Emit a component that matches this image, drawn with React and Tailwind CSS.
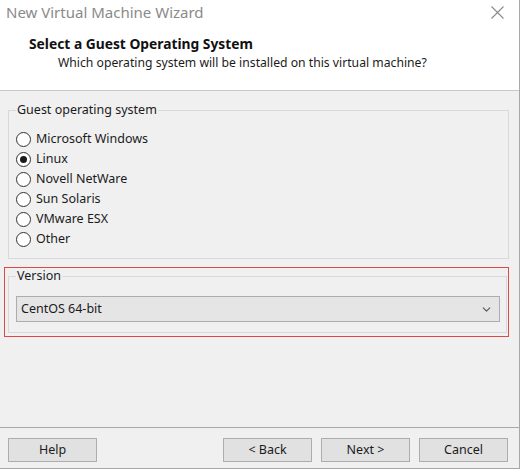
import React from "react";
import { ChevronDown } from "lucide-react";

const systems = [
  { label: "Microsoft Windows", checked: false },
  { label: "Linux", checked: true },
  { label: "Novell NetWare", checked: false },
  { label: "Sun Solaris", checked: false },
  { label: "VMware ESX", checked: false },
  { label: "Other", checked: false },
];

function Radio({ label, checked }) {
  return (
    <label className="flex items-center h-[20px] gap-[5px] text-[12.5px] text-[#1b1b1b]">
      <span className="flex items-center justify-center w-[15px] h-[15px] rounded-full border border-[#333] bg-white">
        {checked && <span className="w-[7px] h-[7px] rounded-full bg-[#1b1b1b]" />}
      </span>
      {label}
    </label>
  );
}

function WizButton({ children, className = "" }) {
  return (
    <button
      type="button"
      className={`w-[89px] h-[24px] border border-[#adadad] bg-[#e1e1e1] text-[12.5px] text-[#1b1b1b] ${className}`}
    >
      {children}
    </button>
  );
}

export default function App() {
  return (
    <div className="w-[524px] h-[475px] bg-white overflow-hidden" style={{ fontFamily: '"Noto Sans", "Open Sans", sans-serif' }}>
      <div className="w-[520px] h-[469px] flex flex-col bg-[#f0f0f0] border-r border-b border-[#a8a8a8]">
        {/* title bar + header */}
        <div className="bg-white border-b border-[#c8c8c8]">
          <div className="h-[24px] flex items-center justify-between pl-[6px] pr-[15px]">
            <span className="text-[15px] text-[#8a8a8a] leading-none">New Virtual Machine Wizard</span>
            <svg width="13" height="13" viewBox="0 0 13 13" className="text-[#8a8a8a]">
              <path d="M0.5 0.5 L12.5 12.5 M12.5 0.5 L0.5 12.5" stroke="currentColor" strokeWidth="1.1" fill="none" />
            </svg>
          </div>
          <div className="h-[66px] pt-[11px]">
            <div className="pl-[29px] text-[13.8px] font-bold leading-[18px] text-[#111]">Select a Guest Operating System</div>
            <div className="pl-[58px] mt-[2px] text-[12.2px] leading-[16px] text-[#1b1b1b]">
              Which operating system will be installed on this virtual machine?
            </div>
          </div>
        </div>

        {/* body */}
        <div className="flex-1 pl-[4px] pr-[10px]">
          <fieldset className="mt-[11px] ml-[4px] border border-[#d9d9d9] pl-[7px] pt-[11px] pb-[9px]">
            <legend className="px-[1px] text-[12.5px] leading-[16px] text-[#1b1b1b]">Guest operating system</legend>
            {systems.map((s) => (
              <Radio key={s.label} label={s.label} checked={s.checked} />
            ))}
          </fieldset>

          <div className="mt-[8px] border border-[#e04848]">
            <fieldset className="ml-[3px] mr-[1px] mb-[3px] border border-[#d9d9d9] pl-[7px] pr-[6px] pt-[12px] pb-[10px]">
              <legend className="px-[1px] text-[12.5px] leading-[16px] text-[#1b1b1b]">Version</legend>
              <div className="h-[26px] flex items-center justify-between border border-[#adadad] bg-[#e5e5e5] pl-[4px] pr-[6px]">
                <span className="text-[12.5px] text-[#1b1b1b]">CentOS 64-bit</span>
                <ChevronDown size={13} strokeWidth={2} className="text-[#555]" />
              </div>
            </fieldset>
          </div>
        </div>

        {/* footer */}
        <div className="h-[41px] border-t border-[#a8a8a8] flex items-start pt-[10px] pl-[8px] pr-[11px]">
          <WizButton>Help</WizButton>
          <div className="ml-auto flex gap-[9px]">
            <WizButton>&lt; Back</WizButton>
            <WizButton>Next &gt;</WizButton>
            <WizButton>Cancel</WizButton>
          </div>
        </div>
      </div>
    </div>
  );
}
